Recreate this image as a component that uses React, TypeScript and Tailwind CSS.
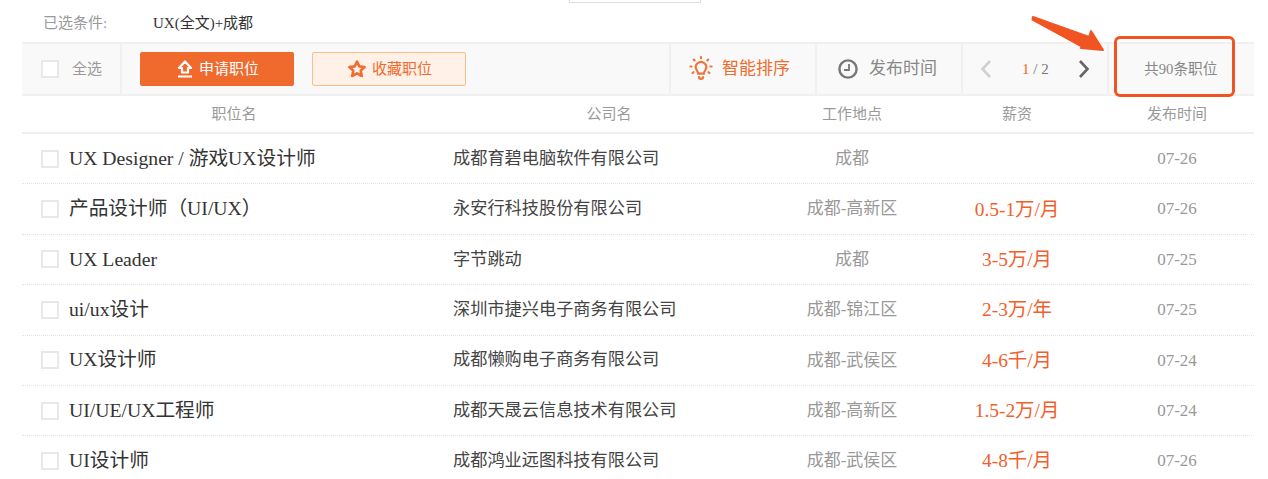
import React from 'react';

const jobs = [
  { title: 'UX Designer / 游戏UX设计师', company: '成都育碧电脑软件有限公司', place: '成都', pay: '', date: '07-26' },
  { title: '产品设计师（UI/UX）', company: '永安行科技股份有限公司', place: '成都-高新区', pay: '0.5-1万/月', date: '07-26' },
  { title: 'UX Leader', company: '字节跳动', place: '成都', pay: '3-5万/月', date: '07-25' },
  { title: 'ui/ux设计', company: '深圳市捷兴电子商务有限公司', place: '成都-锦江区', pay: '2-3万/年', date: '07-25' },
  { title: 'UX设计师', company: '成都懒购电子商务有限公司', place: '成都-武侯区', pay: '4-6千/月', date: '07-24' },
  { title: 'UI/UE/UX工程师', company: '成都天晟云信息技术有限公司', place: '成都-高新区', pay: '1.5-2万/月', date: '07-24' },
  { title: 'UI设计师', company: '成都鸿业远图科技有限公司', place: '成都-武侯区', pay: '4-8千/月', date: '07-26' },
];

const Checkbox = () => <span className="block w-[18px] h-[18px] shrink-0 border-2 border-[#e8e8e8] bg-white" />;

const App = () => {
  return (
    <div className="relative w-[1268px] h-[479px] overflow-hidden bg-white font-['Liberation_Serif','Noto_Sans_CJK_SC',serif]">
      {/* stub of the box cut off by the top edge */}
      <div className="absolute left-[569px] top-0 w-[132px] h-[3px] border border-t-0 border-[#dddddd]" />

      <div className="pl-[22px] w-[1254px]">
        <div className="h-[42px] flex items-center pl-[21px] pt-[4px] text-[15px]">
          <span className="w-[110px] text-[#999999]">已选条件:</span>
          <span className="text-[#333333]">UX(全文)+成都</span>
        </div>

        {/* toolbar */}
        <div className="h-[54px] flex items-stretch bg-[#f9f9f9] border-y-2 border-[#f0f0f0]">
          <div className="w-[100px] flex items-center pl-[19px] gap-[13px] border-r-2 border-[#f0f0f0] text-[15px] text-[#999999]">
            <Checkbox />
            <span>全选</span>
          </div>
          <div className="w-[547px] flex items-center pl-[18px] gap-[18px]">
            <button className="w-[154px] h-[34px] flex items-center pl-[37px] gap-[6px] rounded-[2px] bg-[#f06a2d] text-white text-[15px]">
              <svg width="16" height="18" viewBox="0 0 16 18" fill="none">
                <path d="M8 1.5 L14 8 H11 V12.5 H5 V8 H2 Z" stroke="#fff" strokeWidth="2.2" strokeLinejoin="round" />
                <path d="M1 16.5 H15" stroke="#fff" strokeWidth="2" />
              </svg>
              申请职位
            </button>
            <button className="w-[154px] h-[34px] flex items-center pl-[34px] gap-[5px] rounded-[2px] bg-[#fff1e8] border border-[#f9be84] text-[#f16b2c] text-[15px]">
              <svg width="20" height="20" viewBox="0 0 20 20" fill="none">
                <path d="M10 2.5 L12.3 7.4 L17.6 8 L13.7 11.6 L14.8 17 L10 14.3 L5.2 17 L6.3 11.6 L2.4 8 L7.7 7.4 Z" stroke="#ef6c33" strokeWidth="2.6" strokeLinejoin="round" />
              </svg>
              收藏职位
            </button>
          </div>
          <div className="w-[146px] flex items-center pl-[18px] gap-[9px] border-l-2 border-[#f0f0f0] text-[17px] text-[#f16b2c]">
            <svg width="24" height="26" viewBox="0 0 24 26" fill="none" stroke="#f27238" strokeWidth="2.2" strokeLinecap="round">
              <path d="M7.6 14 a5.2 5.2 0 1 1 8.8 0 c-.7 1.2-1.5 2-1.6 3.6 h-5.6 c-.1-1.6-.9-2.4-1.6-3.6 Z" />
              <path d="M10 21 c0 2.5 4 2.5 4 0" />
              <path d="M12 1.2 v1 M4.8 3.6 l.8 .8 M19.2 3.6 l-.8 .8 M1.4 10.5 h1.2 M21.4 10.5 h1.2 M3.6 17 l.9-.8 M20.4 17 l-.9-.8" />
            </svg>
            智能排序
          </div>
          <div className="w-[146px] flex items-center pl-[21px] gap-[11px] border-l-2 border-[#f0f0f0] text-[17px] text-[#888888]">
            <svg width="20" height="20" viewBox="0 0 20 20" fill="none" stroke="#777777">
              <circle cx="10" cy="10" r="8.6" strokeWidth="2.4" />
              <path d="M11 5 V11 H6" strokeWidth="1.8" />
            </svg>
            发布时间
          </div>
          <div className="w-[148px] flex items-center pl-[16px] border-x-2 border-[#f0f0f0]">
            <svg width="14" height="20" viewBox="0 0 14 20" fill="none" stroke="#d0d0d0" strokeWidth="2.6">
              <path d="M11 2 L3.5 10 L11 18" />
            </svg>
            <span className="ml-[29px] w-[50px] text-[15px] text-[#777777]">
              <span className="text-[#f16b2c]">1</span> / 2
            </span>
            <svg className="ml-[5px]" width="14" height="20" viewBox="0 0 14 20" fill="none" stroke="#666666" strokeWidth="2.6">
              <path d="M3 2 L10.5 10 L3 18" />
            </svg>
          </div>
          <div className="flex-1 flex items-center pl-[35px] text-[14.7px] text-[#888888]">共90条职位</div>
        </div>

        {/* column heads */}
        <div className="h-[38px] grid grid-cols-[431px_312px_174px_156px_1fr] items-center text-[15px] text-[#999999] text-center border-b-2 border-[#f0f0f0]">
          <span className="pr-[7px]">职位名</span>
          <span>公司名</span>
          <span>工作地点</span>
          <span>薪资</span>
          <span className="pl-[5px]">发布时间</span>
        </div>

        {jobs.map((job) => (
          <div key={job.title} className="h-[50.4px] grid grid-cols-[431px_312px_174px_156px_1fr] items-center text-center border-b border-dotted border-[#e4e4e4]">
            <div className="flex items-center pl-[19px] gap-[10px] text-[19.7px] text-[#333333] text-left">
              <Checkbox />
              <span>{job.title}</span>
            </div>
            <span className="text-[17.2px] text-[#444444] text-left">{job.company}</span>
            <span className="text-[17px] text-[#999999]">{job.place}</span>
            <span className="text-[19.4px] text-[#f1602c]">{job.pay}</span>
            <span className="pl-[5px] text-[17px] text-[#999999]">{job.date}</span>
          </div>
        ))}
      </div>

      {/* annotation over the screenshot */}
      <svg className="absolute left-[1025px] top-[10px]" width="90" height="50" viewBox="0 0 90 50" fill="#f15423">
        <path d="M8 7 L7.5 9.5 L58 37 L56 38 L78 40 L66 21 L64 27 Z" stroke="#f15423" strokeWidth="2" strokeLinejoin="round" />
      </svg>
      <div className="absolute left-[1114px] top-[36px] w-[121px] h-[61px] rounded-[6px] border-[3px] border-[#f15423]" />
    </div>
  );
};

export default App;
